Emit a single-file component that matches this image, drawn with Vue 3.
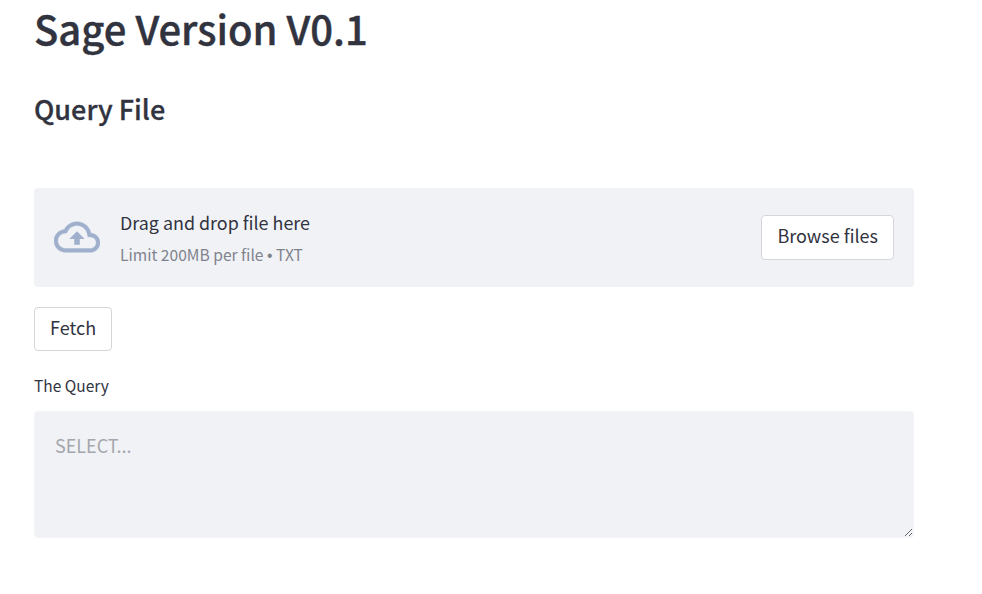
<template>
  <main class="page">
    <h1 class="title">Sage Version V0.1</h1>
    <h2 class="subtitle">Query File</h2>

    <section class="dropzone">
      <svg class="cloud" viewBox="0 0 24 24" fill="none">
        <path d="M19.35 10.04C18.67 6.59 15.64 4 12 4 9.11 4 6.6 5.64 5.35 8.04 2.34 8.36 0 10.91 0 14c0 3.31 2.69 6 6 6h13c2.76 0 5-2.24 5-5 0-2.64-2.05-4.78-4.65-4.96zM19 18H6c-2.21 0-4-1.79-4-4 0-2.05 1.53-3.76 3.56-3.97l1.07-.11.5-.95C8.08 7.14 9.94 6 12 6c2.62 0 4.88 1.86 5.39 4.43l.3 1.5 1.53.11c1.56.1 2.78 1.41 2.78 2.96 0 1.65-1.35 3-3 3z" fill="#9fafcc" stroke="#9fafcc" stroke-width="0.2"/>
        <path d="M8 13h2.55v3h2.9v-3H16l-4-4z" fill="#9fafcc"/>
      </svg>
      <div class="drop-text">
        <div class="drop-main">Drag and drop file here</div>
        <div class="drop-hint">Limit 200MB per file <span class="dot">•</span> TXT</div>
      </div>
      <button class="btn browse">Browse files</button>
    </section>

    <button class="btn fetch">Fetch</button>

    <label class="label" for="query">The Query</label>
    <textarea id="query" class="query" placeholder="SELECT..."></textarea>
  </main>
</template>

<script setup>
</script>

<style>
body {
  background: #fff;
}
</style>

<style scoped>
.page {
  width: 880px;
  padding-left: 34px;
  font-family: "Noto Sans CJK SC", "Noto Sans", sans-serif;
  color: #31333f;
}

.title {
  margin: 0;
  padding-top: 3px;
  font-size: 40px;
  line-height: 50px;
  font-weight: 500;
  -webkit-text-stroke: 0.4px #31333f;
}

.subtitle {
  margin: 0;
  padding-top: 36px;
  font-size: 27px;
  line-height: 40px;
  font-weight: 500;
  -webkit-text-stroke: 0.3px #31333f;
}

.dropzone {
  display: flex;
  align-items: center;
  height: 99px;
  margin-top: 59px;
  padding: 0 20px;
  box-sizing: border-box;
  background: #f0f2f6;
  border-radius: 4px;
}

.cloud {
  width: 46px;
  height: 46px;
  margin-top: -1px;
  margin-right: 20px;
}

.drop-text {
  flex: 1;
  margin-top: 1px;
}

.drop-main {
  font-size: 17.9px;
  line-height: 24px;
}

.drop-hint {
  margin-top: 10px;
  font-size: 15.6px;
  line-height: 20px;
  color: #80838d;
}

.dot {
  font-family: "Liberation Sans", sans-serif;
}

.btn {
  box-sizing: border-box;
  height: 44px;
  padding: 0 15px 4px;
  font-family: inherit;
  font-size: 18px;
  color: #31333f;
  background: #fff;
  border: 1px solid #d5d6da;
  border-radius: 4px;
}

.browse {
  height: 45px;
  padding-bottom: 5px;
}

.fetch {
  display: block;
  margin-top: 20px;
}

.label {
  display: block;
  margin-top: 23px;
  font-size: 15.5px;
  line-height: 22px;
}

.query {
  display: block;
  box-sizing: border-box;
  width: 100%;
  height: 127px;
  margin-top: 15px;
  padding: 20px;
  font-family: inherit;
  font-size: 18px;
  line-height: 27px;
  color: #31333f;
  background: #f0f2f6;
  border: 1px solid #f4f5f8;
  border-radius: 4px;
  outline: none;
}

.query::placeholder {
  color: #a5a7ad;
  opacity: 1;
}
</style>
